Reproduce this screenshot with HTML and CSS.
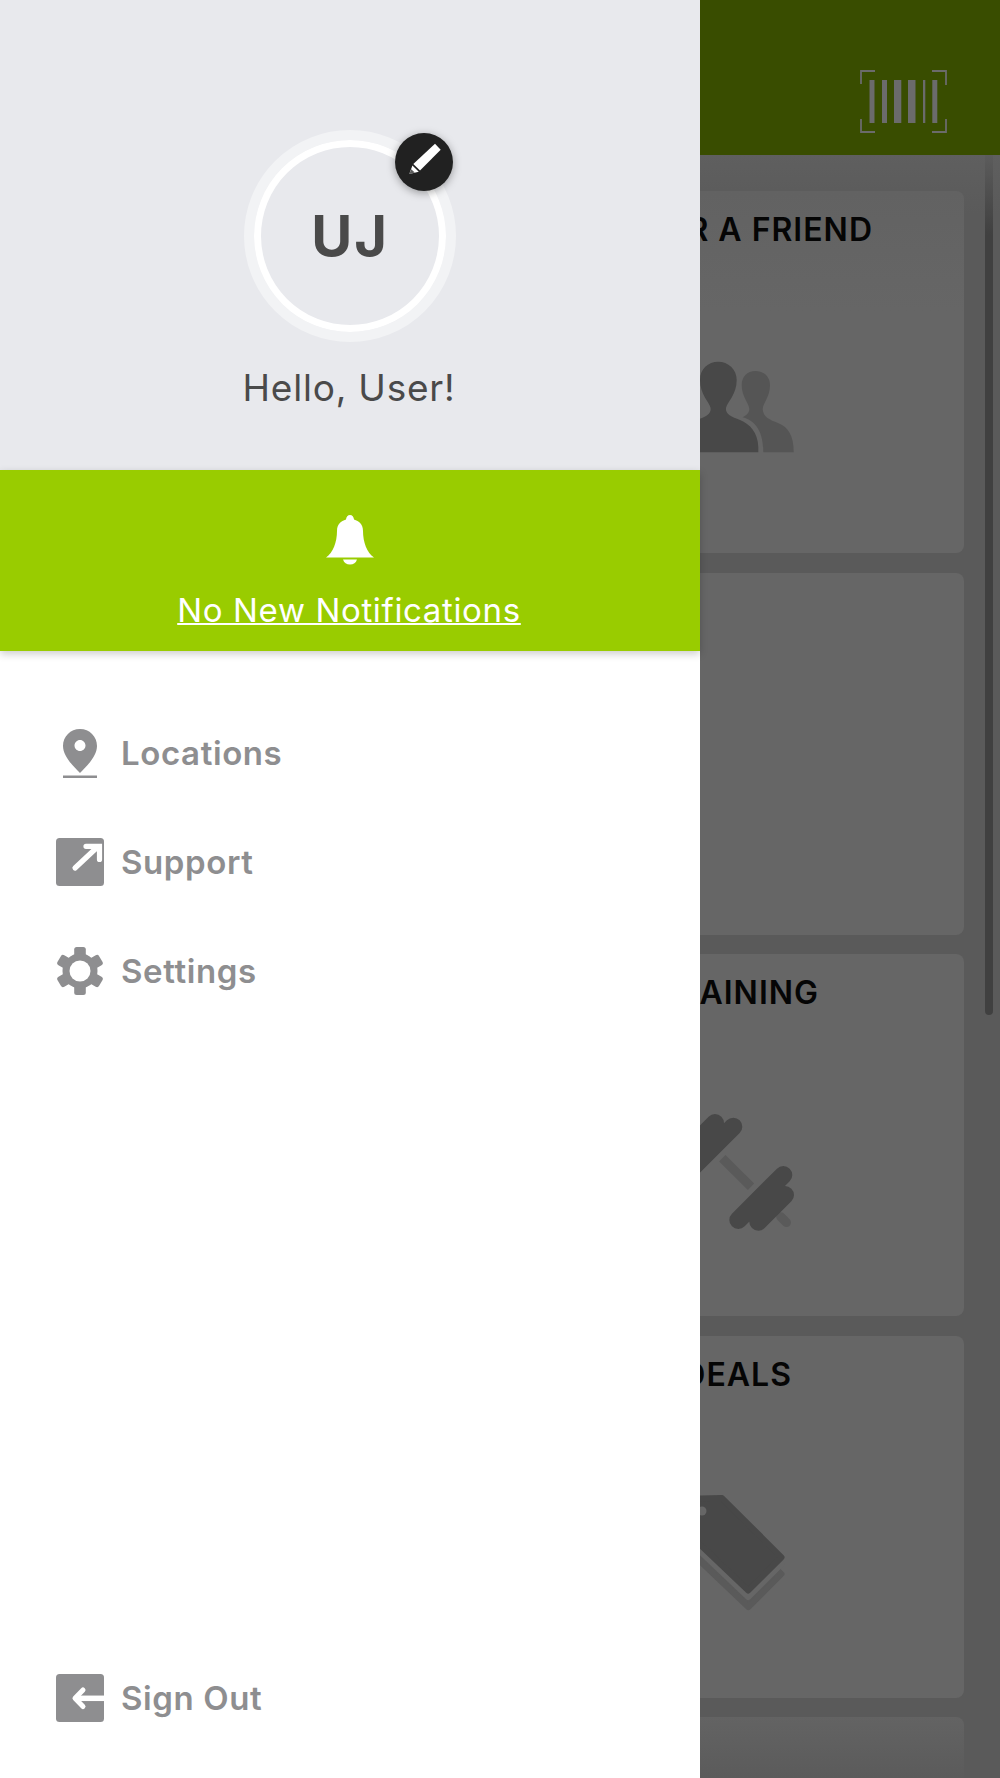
FILE: index.html
```html
<!DOCTYPE html>
<html lang="en">
<head>
<meta charset="utf-8">
<title>Menu</title>
<link rel="stylesheet" href="styles.css">
</head>
<body>
<div class="app">
  <header class="topbar">
    <svg class="barcode" width="87" height="63" viewBox="0 0 87 63">
      <g fill="none" stroke="#6b6b6b" stroke-width="1.8">
        <path d="M1 14V1h14M72 1h14v14M1 49v13h14M72 62h14V49"/>
      </g>
      <g fill="#6b6b6b">
        <rect x="9.500" y="10" width="5" height="43"/>
        <rect x="22" y="10" width="5" height="43"/>
        <rect x="34" y="10" width="7.300" height="43"/>
        <rect x="48" y="10" width="7.500" height="43"/>
        <rect x="63" y="10" width="2.300" height="43"/>
        <rect x="72.300" y="10" width="5" height="43"/>
      </g>
    </svg>
  </header>
  <main class="cards">
    <section class="card card-refer">
      <h2 class="card-title">REFER A FRIEND</h2>
      <svg class="card-icon" width="140" height="130" viewBox="0 0 140 130">
        <path fill="#555" d="M133.700 105.300C133.700 88 128 80 118 76C110 73 103 70 102.700 62C103 56 110 50 110 38C110 30 104 24 95.700 24C87 24 81.700 30 81.700 38C81.700 50 89 56 89.300 62C89.500 66 86 68.500 82.700 70.300C92 73 103.300 80 103.300 105.300Z"/>
        <path fill="#484848" d="M98.300 105.300V100C98 86 90 77 80 73C72 70 65 67 66 61C67 55 76.700 48 76.700 33C76.700 22 68 14.700 58.300 14.700C48 14.700 40 22 40 33C40 48 49.600 55 50.600 61C51.600 67 45 70 37 73C27 77 19 86 18.300 100V105.300Z"/>
      </svg>
    </section>
    <section class="card"></section>
    <section class="card card-training">
      <h2 class="card-title">PERSONAL TRAINING</h2>
      <svg class="card-icon" width="140" height="130" viewBox="0 0 140 130">
        <g stroke="#5a5a5a" stroke-width="9">
          <path d="M62.300 48.300L91 76.700"/>
          <path d="M120.700 106.700L126.500 112.500" stroke-linecap="round"/>
        </g>
        <g stroke="#484848" stroke-width="18" stroke-linecap="round">
          <path d="M78.300 110L123.300 65M98.300 111.700L125 85"/>
          <path d="M73.300 16.700L20 70M55 13L20 48"/>
        </g>
      </svg>
    </section>
    <section class="card card-deals">
      <h2 class="card-title">HOT DEALS</h2>
      <svg class="card-icon" width="140" height="130" viewBox="0 0 140 130">
        <path class="tag-back" transform="translate(0 16.700)" d="M20 7L62 6L121.500 65.300L88.300 98.500L20 33.500Z"/>
        <path class="tag-gap" transform="translate(0 6.500)" d="M20 7L62 6L121.500 65.300L88.300 98.500L20 33.500Z"/>
        <path class="tag-front" d="M20 7L62 6L121.500 65.300L88.300 98.500L20 33.500Z"/>
        <circle class="tag-hole" cx="42" cy="19" r="4.500"/>
      </svg>
    </section>
    <section class="card card-fade"></section>
  </main>
  <div class="scrollbar"></div>

  <aside class="drawer">
    <div class="profile">
      <div class="avatar">
        <div class="avatar-inner">UJ</div>
        <div class="edit-badge">
          <svg width="58" height="58" viewBox="0 0 58 58">
            <path fill="#fff" d="M40 10.700L45.700 16.700L25 37.500L18.300 31Z"/>
            <path fill="#fff" d="M17.400 32.500L23.800 38.700L14.300 41Z"/>
            <path fill="#212121" d="M16.300 36.200L19.700 39.500L14.300 41Z" opacity=".75"/>
          </svg>
        </div>
      </div>
      <p class="hello">Hello, User!</p>
    </div>
    <a class="notice">
      <svg width="48" height="50" viewBox="0 0 48 50">
        <path fill="#fff" d="M24 0C21.800 0 20.200 1.800 20 4.500C15 6 11 9 11 16C11 27 7 38 0 42.500H48C41 38 37 27 37 16C37 9 33 6 28 4.500C27.800 1.800 26.200 0 24 0Z"/>
        <path fill="#fff" d="M17 44.500H31C30 47.800 27.500 49.500 24 49.500C20.500 49.500 18 47.800 17 44.500Z"/>
      </svg>
      <span class="notice-text">No New Notifications</span>
    </a>
    <nav class="menu">
      <a class="menu-row">
        <svg class="menu-icon" width="48" height="52" viewBox="0 0 48 52">
          <path fill="#8e8e90" fill-rule="evenodd" d="M24 0C14.500 0 7 7.500 7 17C7 27 17 37 24 44C31 37 41 27 41 17C41 7.500 33.500 0 24 0ZM24 11C27 11 29.500 13.500 29.500 16.500C29.500 19.500 27 22 24 22C21 22 18.500 19.500 18.500 16.500C18.500 13.500 21 11 24 11Z"/>
          <rect x="7" y="46.500" width="34" height="2.500" fill="#8e8e90"/>
        </svg>
        <span>Locations</span>
      </a>
      <a class="menu-row">
        <svg class="menu-icon" width="48" height="48" viewBox="0 0 48 48">
          <rect width="48" height="48" rx="3.500" fill="#8e8e90"/>
          <path fill="none" stroke="#fff" stroke-width="5.200" stroke-linecap="round" d="M19 30L42 8.500M30 8.300H43.500V21.500"/>
        </svg>
        <span>Support</span>
      </a>
      <a class="menu-row">
        <svg class="menu-icon" width="48" height="48" viewBox="0 0 48 48">
          <g fill="#8e8e90">
            <rect x="18.200" y="0" width="11.600" height="48" rx="2.500"/>
            <rect x="18.200" y="0" width="11.600" height="48" rx="2.500" transform="rotate(60 24 24)"/>
            <rect x="18.200" y="0" width="11.600" height="48" rx="2.500" transform="rotate(120 24 24)"/>
          </g>
          <circle cx="24" cy="24" r="14" fill="none" stroke="#8e8e90" stroke-width="7"/>
          <circle cx="24" cy="24" r="10.500" fill="#fff"/>
        </svg>
        <span>Settings</span>
      </a>
    </nav>
    <a class="menu-row signout">
      <svg class="menu-icon" width="48" height="48" viewBox="0 0 48 48">
        <rect width="48" height="48" rx="3.500" fill="#8e8e90"/>
        <path fill="none" stroke="#fff" stroke-width="5.500" d="M19 24.300H48"/>
        <path fill="none" stroke="#fff" stroke-width="5" stroke-linecap="round" stroke-linejoin="round" d="M27 16L19 24.300L27 32.500"/>
      </svg>
      <span>Sign Out</span>
    </a>
  </aside>
</div>
</body>
</html>
```
FILE: styles.css
```css
* { box-sizing: border-box; }
html, body { margin: 0; padding: 0; }
body {
  font-family: Inter, "Liberation Sans", sans-serif;
  background: #5a5a5a;
}
.app {
  position: relative;
  width: 1000px;
  height: 1778px;
  overflow: hidden;
}
.topbar {
  height: 155px;
  background: #394d00;
  display: flex;
  justify-content: flex-end;
  align-items: flex-start;
  padding: 70px 53px 0 0;
}
.barcode { display: block; }
.cards {
  display: flex;
  flex-direction: column;
  gap: 19.500px;
  padding: 36px 36px 0;
  background: linear-gradient(#5f5f5f, #5a5a5a 60px);
}
.card {
  height: 362px;
  border-radius: 8px;
  background: #666;
  display: flex;
  flex-direction: column;
  flex: none;
  padding-top: 21px;
}
.card-refer { background: linear-gradient(#626262, #666 120px); }
.card-fade { background: linear-gradient(#636363, #5b5b5b 60px); }
.card-title {
  margin: 0;
  height: 36px;
  font-size: 32px;
  line-height: 36px;
  font-weight: 600;
  letter-spacing: 1px;
  color: #050505;
  text-align: right;
  white-space: nowrap;
}
.card-refer .card-title { padding-right: 91px; }
.card-training .card-title { padding-right: 145px; }
.card-deals .card-title { padding-right: 172px; }
.card-icon {
  display: block;
  align-self: flex-end;
  margin: 99px 164px 0 0;
}
.tag-front, .tag-back, .tag-gap {
  stroke-width: 6px;
  stroke-linejoin: round;
}
.tag-front { fill: #484848; stroke: #484848; }
.tag-gap { fill: #666; stroke: #666; }
.tag-back { fill: #5a5a5a; stroke: #5a5a5a; }
.tag-hole { fill: #666; }
.scrollbar {
  position: absolute;
  left: 985px;
  top: 155px;
  width: 8px;
  height: 860px;
  border-radius: 0 0 4px 4px;
  background: linear-gradient(#5c5c5c, #404040 80px);
}
.drawer {
  position: absolute;
  left: 0;
  top: 0;
  width: 700px;
  height: 1778px;
  background: #fff;
  display: flex;
  flex-direction: column;
}
.profile {
  height: 470px;
  background: #e8e9ed;
  display: flex;
  flex-direction: column;
  align-items: center;
  padding-top: 130px;
}
.avatar {
  position: relative;
  width: 212px;
  height: 212px;
  border-radius: 50%;
  border: 10px solid #f2f3f5;
}
.avatar-inner {
  width: 192px;
  height: 192px;
  border-radius: 50%;
  border: 7px solid #fff;
  display: flex;
  align-items: center;
  justify-content: center;
  font-size: 56px;
  font-weight: 700;
  letter-spacing: 2px;
  color: #4a4a4a;
}
.edit-badge {
  position: absolute;
  left: 141px;
  top: -7px;
  width: 58px;
  height: 58px;
  border-radius: 50%;
  background: #212121;
  box-shadow: 0 2px 8px rgba(0, 0, 0, .35);
}
.edit-badge svg { display: block; }
.hello {
  margin: 24px 2px 0 0;
  font-size: 37px;
  line-height: 44px;
  color: #4a4a4a;
  letter-spacing: .8px;
}
.notice {
  height: 181px;
  background: #99cc00;
  box-shadow: 0 3px 8px rgba(0, 0, 0, .2);
  display: flex;
  flex-direction: column;
  align-items: center;
  padding-top: 45px;
  color: #fff;
  position: relative;
}
.notice svg { display: block; }
.notice-text {
  margin: 25px 2px 0 0;
  font-size: 33px;
  line-height: 40px;
  text-decoration: underline;
  text-decoration-thickness: 2px;
  letter-spacing: .65px;
}
.menu {
  display: flex;
  flex-direction: column;
  padding-top: 47px;
}
.menu-row {
  height: 109px;
  display: flex;
  align-items: center;
  gap: 17px;
  padding-left: 56px;
  font-size: 33px;
  font-weight: 600;
  color: #8e8e90;
  letter-spacing: .6px;
}
.menu-icon { display: block; flex: none; }
.menu-row:first-child .menu-icon { margin-top: 5px; }
.signout { margin-top: auto; margin-bottom: 26px; }
```
